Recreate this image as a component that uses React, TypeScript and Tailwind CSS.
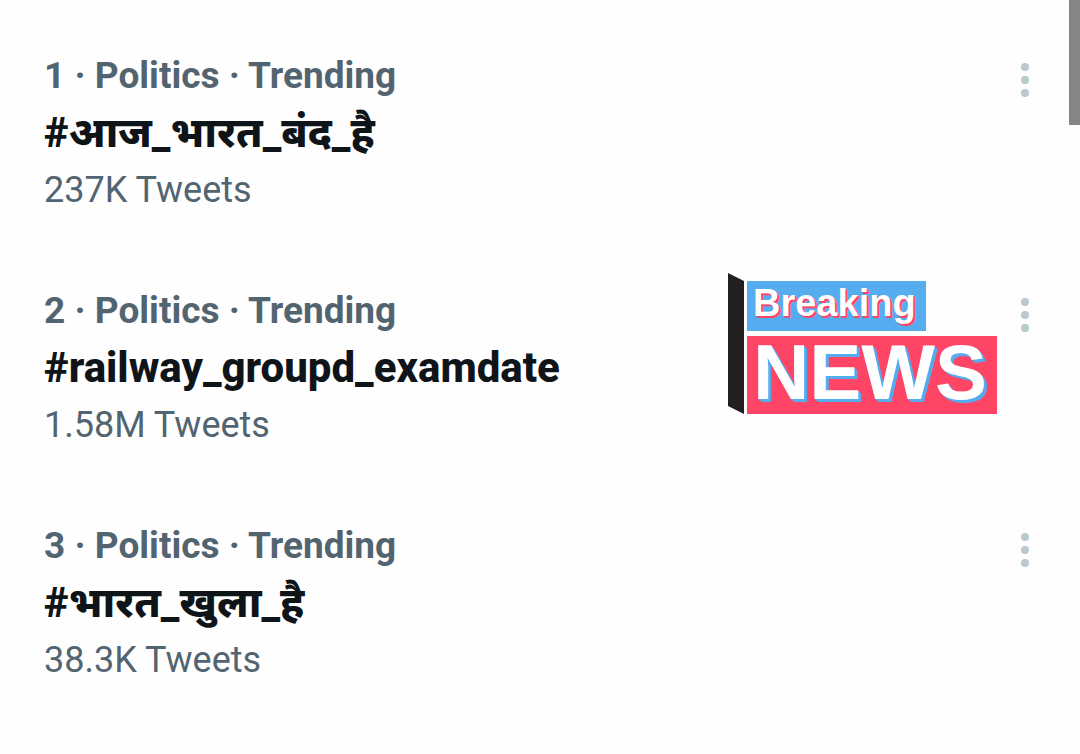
type Trend = {
  rank: number;
  category: string;
  tag: string;
  count: string;
  breaking?: boolean;
};

const trends: Trend[] = [
  { rank: 1, category: "Politics", tag: "#आज_भारत_बंद_है", count: "237K Tweets" },
  { rank: 2, category: "Politics", tag: "#railway_groupd_examdate", count: "1.58M Tweets", breaking: true },
  { rank: 3, category: "Politics", tag: "#भारत_खुला_है", count: "38.3K Tweets" },
];

function BreakingNews() {
  return (
    <div className="flex gap-[3px] font-['Liberation_Sans',Arial,sans-serif] font-bold text-white">
      <svg width="16" height="141" viewBox="0 0 16 141" fill="#231f20">
        <path d="M0 0L16 8V141L0 133Z" />
      </svg>
      <div className="flex flex-col items-start gap-[5px] pt-2">
        <div className="flex h-[50px] items-center bg-[#55acee] pr-2.5 pb-1.5 pl-1.5">
          <span className="text-[38px] leading-[44px] [text-shadow:1px_1px_#ff4566,2px_2px_#ff4566]">
            Breaking
          </span>
        </div>
        <div className="flex h-[78px] items-center bg-[#ff4566] pr-2.5 pb-1.5 pl-1.5">
          <span className="text-[78px] leading-[78px] [text-shadow:1px_1px_#55acee,2px_2px_#55acee,3px_3px_#55acee]">
            NEWS
          </span>
        </div>
      </div>
    </div>
  );
}

function MoreButton() {
  return (
    <button aria-label="More" className="mt-2 flex h-10 w-8 shrink-0 items-center justify-center">
      <svg width="8" height="34" viewBox="0 0 8 34" fill="#b9c9d0">
        <circle cx="4" cy="4" r="4" />
        <circle cx="4" cy="17" r="4" />
        <circle cx="4" cy="30" r="4" />
      </svg>
    </button>
  );
}

function TrendRow({ trend }: { trend: Trend }) {
  return (
    <li className="flex h-[235px] items-start pt-[52px] pr-[39px] pl-11">
      <div className="min-w-0 flex-1">
        <p className="text-[37px] leading-[48px] font-bold text-[#536471]">
          {trend.rank} · {trend.category} · Trending
        </p>
        <h2 className="mt-1 text-[42px] leading-[58px] font-extrabold whitespace-nowrap text-[#0f1419]">{trend.tag}</h2>
        <p className="mt-1 text-[36px] leading-[48px] text-[#536471]">{trend.count}</p>
      </div>
      {trend.breaking && (
        <div className="-mt-3.5 mr-3 shrink-0">
          <BreakingNews />
        </div>
      )}
      <MoreButton />
    </li>
  );
}

export default function App() {
  return (
    <main className="relative min-h-screen bg-[#fefefe] font-[Roboto,'Noto_Sans',sans-serif]">
      <ul>
        {trends.map((trend) => (
          <TrendRow key={trend.rank} trend={trend} />
        ))}
      </ul>
      {/* Scroll thumb */}
      <div className="absolute top-0 right-0 h-[125px] w-[11px] bg-[#848587]" />
    </main>
  );
}
